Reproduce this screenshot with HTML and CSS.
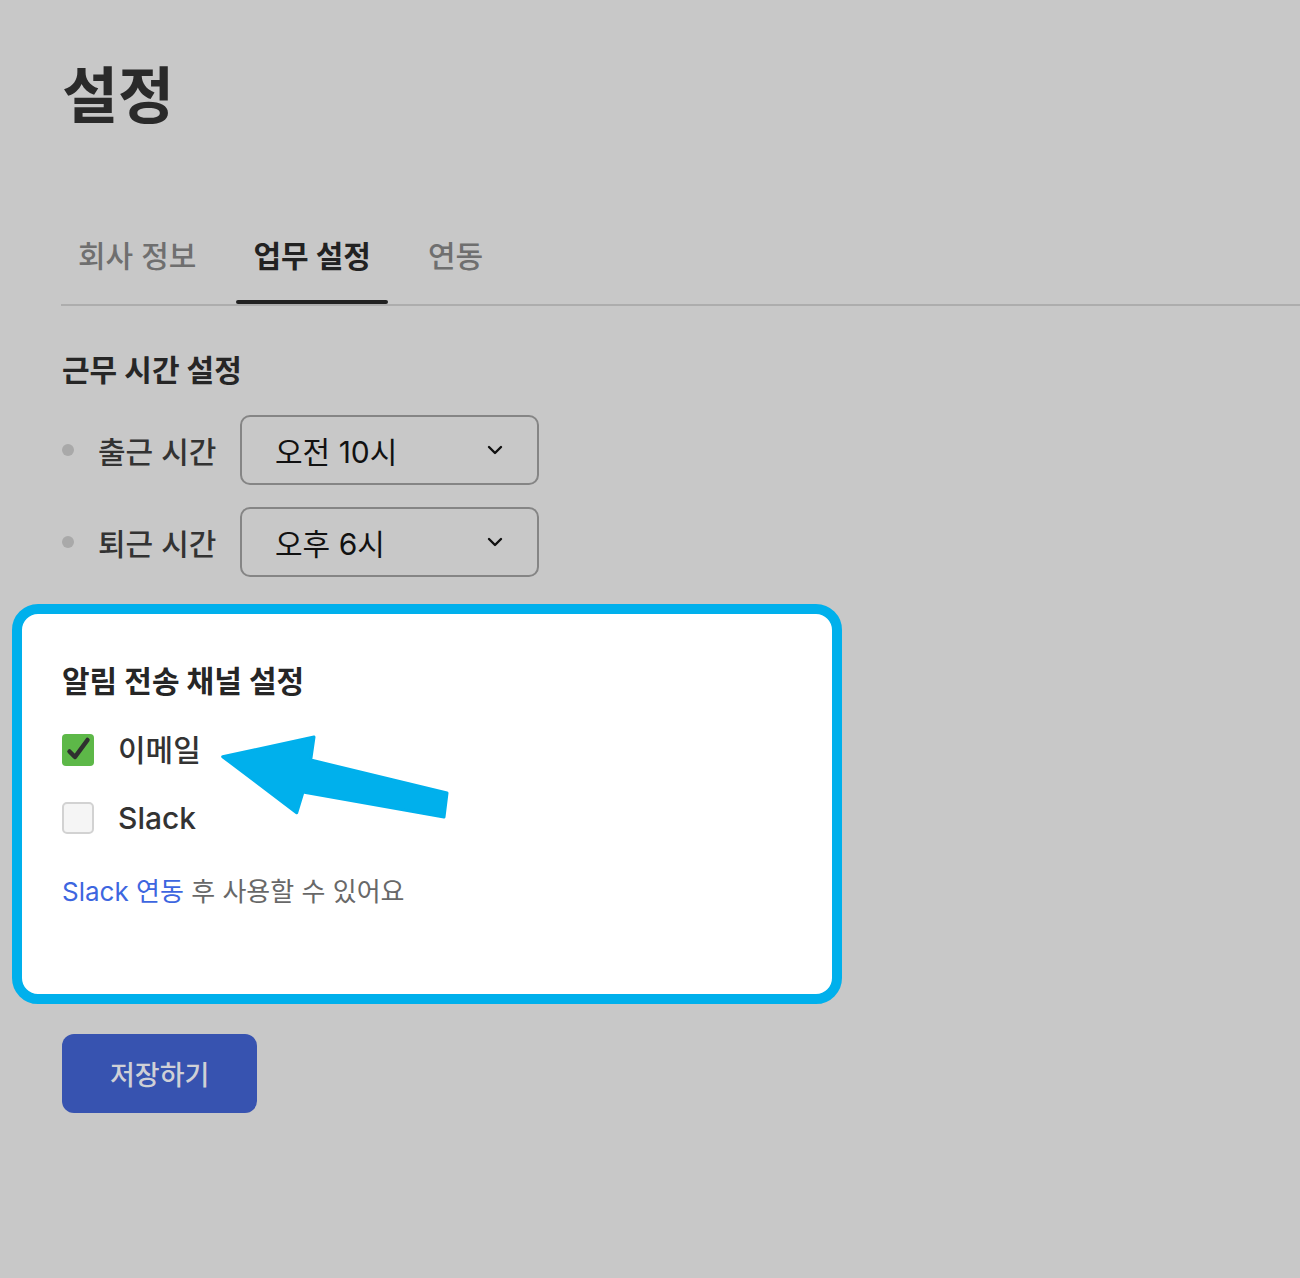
FILE: index.html
```html
<!DOCTYPE html>
<html lang="ko">
<head>
    <meta charset="UTF-8">
    <meta name="viewport" content="width=device-width, initial-scale=1.0">
    <title>설정</title>
    <link rel="stylesheet" href="styles.css">
</head>
<body>
    <main class="page">
        <h1 class="page-title">설정</h1>

        <nav class="tabs">
            <a href="#" class="tab">회사 정보</a>
            <a href="#" class="tab active">업무 설정</a>
            <a href="#" class="tab">연동</a>
        </nav>

        <section class="work-hours">
            <h2 class="section-title">근무 시간 설정</h2>
            <ul class="time-list">
                <li class="time-row">
                    <span class="dot"></span>
                    <span class="time-label">출근 시간</span>
                    <div class="select">
                        <span>오전 10시</span>
                        <svg class="chevron" viewBox="0 0 16 10" fill="none" stroke="currentColor">
                            <path stroke-width="2.4" stroke-linecap="round" stroke-linejoin="round" d="M2 2l6 6 6-6"></path>
                        </svg>
                    </div>
                </li>
                <li class="time-row">
                    <span class="dot"></span>
                    <span class="time-label">퇴근 시간</span>
                    <div class="select">
                        <span>오후 6시</span>
                        <svg class="chevron" viewBox="0 0 16 10" fill="none" stroke="currentColor">
                            <path stroke-width="2.4" stroke-linecap="round" stroke-linejoin="round" d="M2 2l6 6 6-6"></path>
                        </svg>
                    </div>
                </li>
            </ul>
        </section>

        <section class="channel-card">
            <h2 class="section-title">알림 전송 채널 설정</h2>

            <label class="check-row">
                <span class="checkbox checked">
                    <svg viewBox="0 0 32 32" fill="none" stroke="currentColor">
                        <path stroke-width="4.5" stroke-linecap="round" stroke-linejoin="round" d="M7.5 17.5l5.5 5.5 12.5-17"></path>
                    </svg>
                </span>
                <span class="check-label">이메일</span>
            </label>

            <label class="check-row">
                <span class="checkbox"></span>
                <span class="check-label">Slack</span>
            </label>

            <p class="hint"><a href="#">Slack 연동</a> 후 사용할 수 있어요</p>

            <!-- callout arrow drawn over the card -->
            <svg class="callout-arrow" viewBox="0 0 460 220">
                <polygon points="200.7,142.7 292,123 288.7,146 425,179 422,203 281,178 274.7,198.7"
                    fill="#00b0ec" stroke="#00b0ec" stroke-width="3" stroke-linejoin="round"></polygon>
            </svg>
        </section>

        <button class="save-btn">저장하기</button>
    </main>
</body>
</html>
```

FILE: styles.css
```css
:root {
    --bg: #c8c8c8;
    --text-dark: #262626;
    --text-mid: #333333;
    --text-muted: #6f6f6f;
    --cyan: #00b0ec;
    --blue: #3753b0;
    --link: #3d66e0;
}

* {
    box-sizing: border-box;
}

body {
    margin: 0;
    background-color: var(--bg);
    color: var(--text-dark);
    font-family: "Inter", "Noto Sans CJK KR", sans-serif;
    min-height: 100vh;
}

.page {
    padding: 0 0 80px 62px;
}

.page-title {
    margin: 64px 0 0;
    font-size: 61px;
    line-height: 64px;
    font-weight: 700;
    color: #2a2a2a;
}

.tabs {
    display: flex;
    gap: 23px;
    margin-top: 110px;
    margin-left: -1px;
    border-bottom: 2px solid #adadad;
}

.tab {
    display: flex;
    flex-direction: column;
    padding: 0 17px;
    font-size: 30px;
    line-height: 36px;
    font-weight: 500;
    color: var(--text-muted);
    text-decoration: none;
}

.tab::after {
    content: "";
    height: 4px;
    margin: 26px -17px 0;
    border-radius: 2px;
    background: transparent;
}

.tab.active {
    color: #222222;
    font-weight: 700;
}

.tab.active::after {
    background: #222222;
}

.section-title {
    margin: 0;
    font-size: 30px;
    line-height: 34px;
    font-weight: 700;
    color: var(--text-dark);
}

.work-hours {
    margin-top: 47px;
}

.time-list {
    list-style: none;
    margin: 28px 0 0;
    padding: 0;
    display: flex;
    flex-direction: column;
    gap: 22px;
}

.time-row {
    display: flex;
    align-items: center;
}

.dot {
    width: 12px;
    height: 12px;
    border-radius: 50%;
    background-color: #a9a9a9;
    margin-right: 24px;
}

.time-label {
    width: 142px;
    font-size: 30px;
    font-weight: 500;
    color: var(--text-mid);
}

.select {
    display: flex;
    align-items: center;
    justify-content: space-between;
    width: 299px;
    height: 70px;
    padding: 0 34px 0 33px;
    border: 2px solid #858585;
    border-radius: 10px;
    font-size: 30px;
    color: #111111;
}

.chevron {
    width: 16px;
    height: 10px;
    color: #111111;
}

.channel-card {
    position: relative;
    width: 830px;
    margin: 27px 0 0 -50px;
    padding: 50px 40px 86px;
    background-color: #ffffff;
    border: 10px solid var(--cyan);
    border-radius: 26px;
}

.check-row {
    display: flex;
    align-items: center;
    gap: 24px;
    margin-top: 36px;
    cursor: pointer;
}

.channel-card .section-title + .check-row {
    margin-top: 36px;
}

.checkbox {
    width: 32px;
    height: 32px;
    border-radius: 5px;
    background-color: #f5f5f5;
    border: 2px solid #d2d2d2;
    display: flex;
}

.checkbox.checked {
    background-color: #5db848;
    border: none;
    border-radius: 4px;
    color: #2f2f2f;
}

.checkbox svg {
    width: 32px;
    height: 32px;
}

.check-label {
    font-size: 30px;
    line-height: 32px;
    font-weight: 500;
    color: var(--text-mid);
}

.hint {
    margin: 42px 0 0;
    font-size: 26px;
    line-height: 32px;
    color: #686868;
}

.hint a {
    color: var(--link);
    text-decoration: none;
}

.callout-arrow {
    position: absolute;
    left: 0;
    top: 0;
    width: 460px;
    height: 220px;
    pointer-events: none;
}

.save-btn {
    display: block;
    height: 79px;
    margin-top: 30px;
    padding: 0 48px;
    background-color: var(--blue);
    color: #cfd0d6;
    border: none;
    border-radius: 12px;
    font-family: inherit;
    font-size: 27px;
    font-weight: 500;
    cursor: pointer;
}
```
